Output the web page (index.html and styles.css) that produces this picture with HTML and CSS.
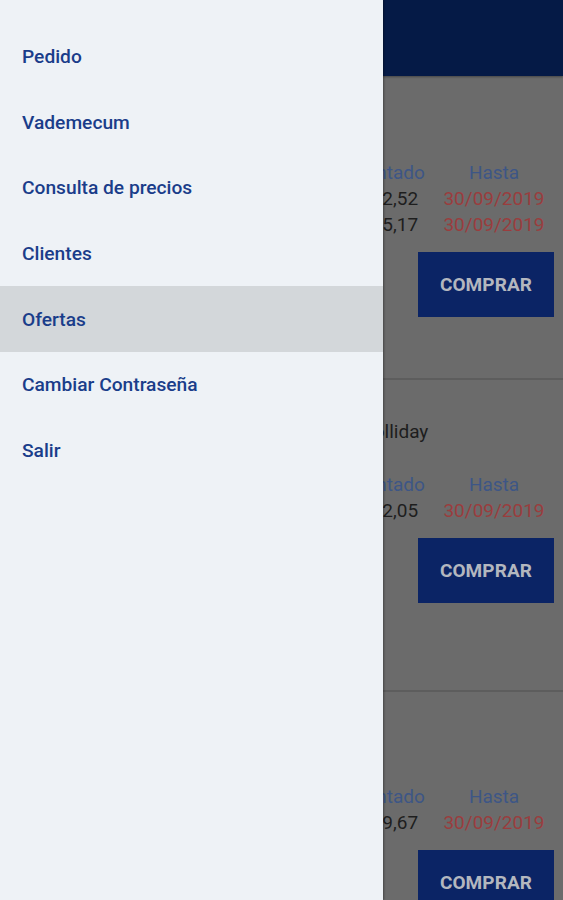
FILE: index.html
```html
<!DOCTYPE html>
<html lang="es">
<head>
<meta charset="utf-8">
<title>Ofertas</title>
<link rel="stylesheet" href="styles.css">
</head>
<body>
<div class="app">
  <header class="topbar"></header>
  <div class="list">
    <div class="list-inner">
      <section class="card">
        <div class="card-title"></div>
        <div class="grid">
          <div class="th"></div><div class="th">Descontado</div><div class="th">Hasta</div>
          <div class="td"></div><div class="td">$ 1.082,52</div><div class="td date">30/09/2019</div>
          <div class="td"></div><div class="td">$ 1.235,17</div><div class="td date">30/09/2019</div>
        </div>
        <div class="actions"><button class="buy">COMPRAR</button></div>
      </section>
      <section class="card">
        <div class="card-title">Ibupirac 400 mg comprimidos x 20 Holliday</div>
        <div class="grid">
          <div class="th"></div><div class="th">Descontado</div><div class="th">Hasta</div>
          <div class="td"></div><div class="td">$ 1.452,05</div><div class="td date">30/09/2019</div>
        </div>
        <div class="actions"><button class="buy">COMPRAR</button></div>
      </section>
      <section class="card">
        <div class="card-title"></div>
        <div class="grid">
          <div class="th"></div><div class="th">Descontado</div><div class="th">Hasta</div>
          <div class="td"></div><div class="td">$ 2.439,67</div><div class="td date">30/09/2019</div>
        </div>
        <div class="actions"><button class="buy">COMPRAR</button></div>
      </section>
    </div>
  </div>

  <nav class="drawer">
    <a class="item">Pedido</a>
    <a class="item">Vademecum</a>
    <a class="item">Consulta de precios</a>
    <a class="item">Clientes</a>
    <a class="item active">Ofertas</a>
    <a class="item">Cambiar Contraseña</a>
    <a class="item">Salir</a>
  </nav>
</div>
</body>
</html>
```
FILE: styles.css
```css
html, body {
  margin: 0;
  padding: 0;
}
body {
  width: 563px;
  height: 900px;
  overflow: hidden;
  background: #6b6b6b;
  font-family: Roboto, "Noto Sans", "Liberation Sans", sans-serif;
}
.app {
  position: relative;
  width: 563px;
  height: 900px;
  overflow: hidden;
}
.topbar {
  position: relative;
  z-index: 1;
  height: 76px;
  background: #051a46;
  box-shadow: 0 1px 2px rgba(0, 0, 0, 0.35);
}
.list {
  height: 824px;
  overflow: hidden;
}
.list-inner {
  margin-top: -8px;
}
.card {
  height: 312px;
  box-sizing: border-box;
  padding: 40px 9px 0 62px;
  border-bottom: 2px solid #5d5d5d;
  display: flex;
  flex-direction: column;
}
.card-title {
  height: 24px;
  font-size: 19px;
  line-height: 24px;
  color: #1d1d1d;
  white-space: nowrap;
}
.grid {
  margin-top: 28px;
  padding-right: 9px;
  display: grid;
  grid-template-columns: 1fr 138px 102px;
  font-size: 19px;
  line-height: 26px;
  text-align: center;
  white-space: nowrap;
}
.th {
  color: #3d5686;
}
.td {
  color: #1e1e1e;
}
.td.date {
  color: #9a3d3e;
}
.actions {
  display: flex;
  justify-content: flex-end;
  margin-top: 14px;
}
.buy {
  width: 136px;
  height: 65px;
  border: 0;
  border-radius: 0;
  background: #0b2465;
  color: #b3b7bf;
  font-family: Roboto, "Liberation Sans", sans-serif;
  font-weight: 700;
  font-size: 19px;
  letter-spacing: 0.1px;
  padding: 0;
}
.drawer {
  position: absolute;
  top: 0;
  left: 0;
  bottom: 0;
  width: 383px;
  z-index: 2;
  background: #eef2f6;
  box-shadow: 1px 0 2px rgba(0, 0, 0, 0.35);
  padding-top: 24px;
  box-sizing: border-box;
  display: flex;
  flex-direction: column;
}
.item {
  height: 65.6px;
  flex-shrink: 0;
  display: flex;
  align-items: center;
  padding-left: 22px;
  font-size: 19.2px;
  font-weight: 500;
  color: #1a3d8a;
  text-decoration: none;
}
.item.active {
  background: #d3d7da;
}
```
